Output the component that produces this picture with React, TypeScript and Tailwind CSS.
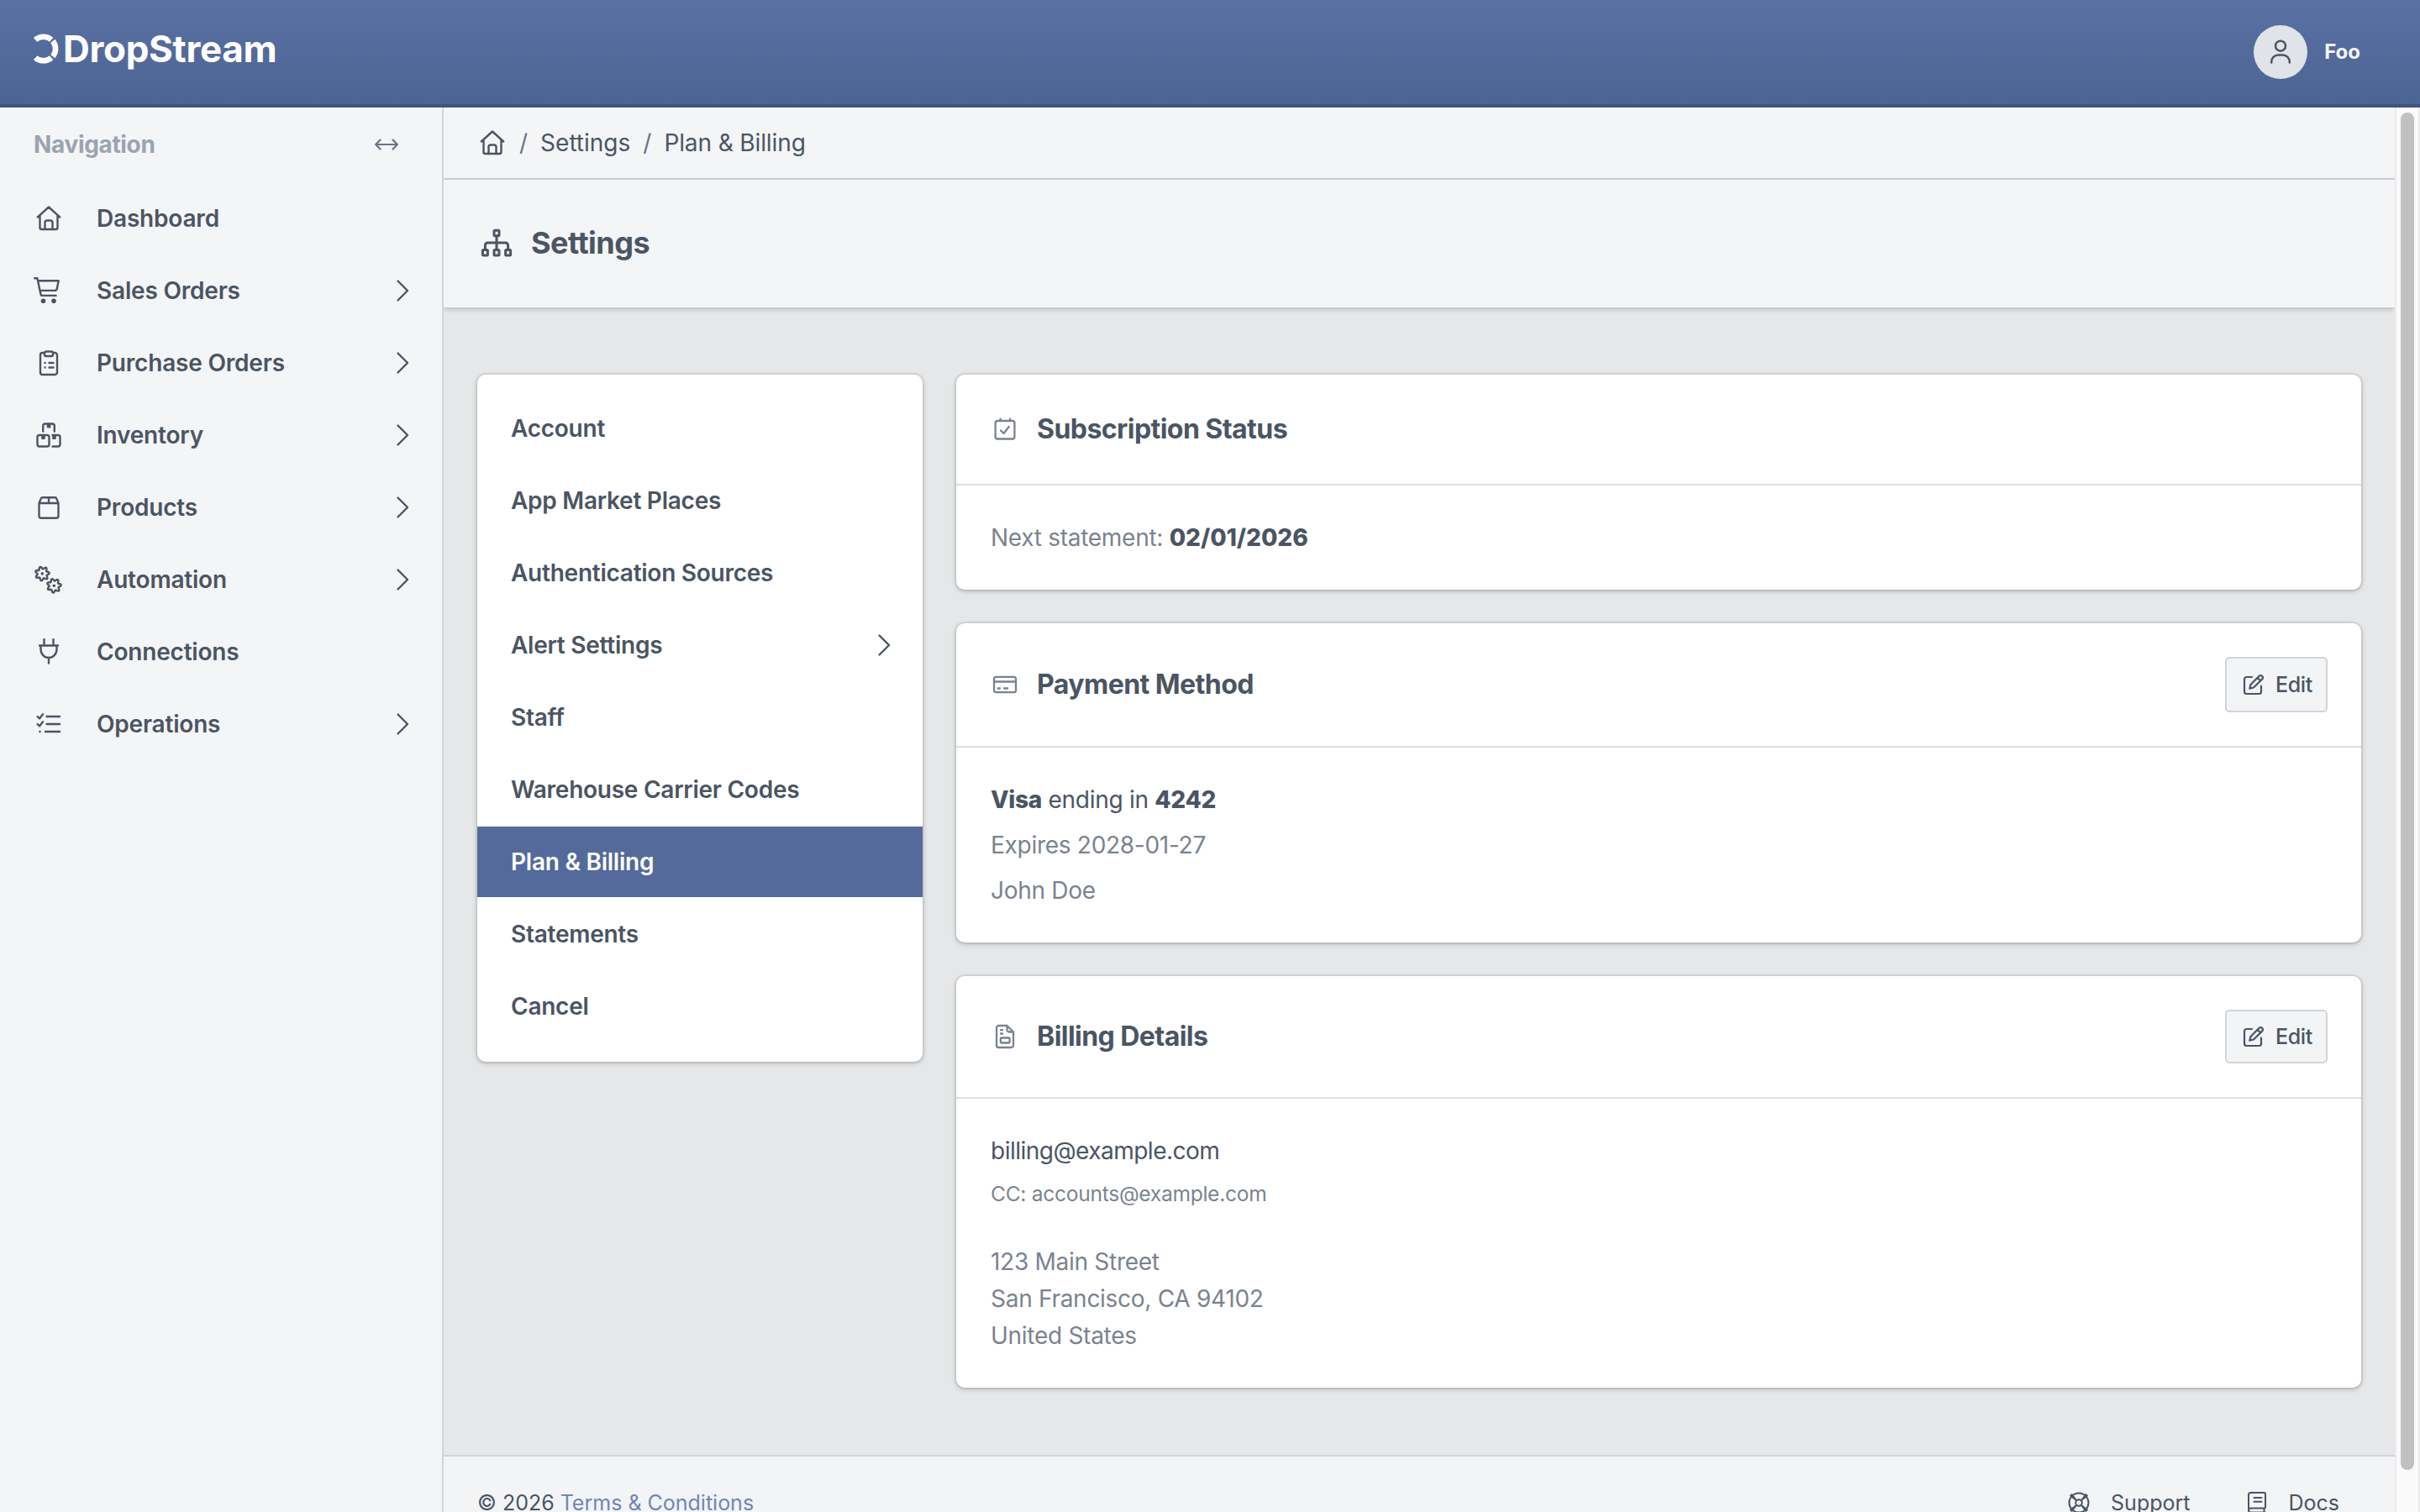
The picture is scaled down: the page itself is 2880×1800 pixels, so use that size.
import React from 'react';

type IconProps = { className?: string };

const HomeIcon = ({ className }: IconProps) => (
  <svg className={className} viewBox="0 0 32 32" fill="none" stroke="currentColor" strokeWidth="2.4" strokeLinecap="round" strokeLinejoin="round">
    <path d="M2.8 14.500 16 2.500l13.200 12M5.500 12.500V27a2 2 0 0 0 2 2h17a2 2 0 0 0 2-2V12.500" />
    <path d="M11.500 29v-8a2.500 2.500 0 0 1 2.500-2.500h4a2.500 2.500 0 0 1 2.500 2.500v8" />
  </svg>
);

const CartIcon = ({ className }: IconProps) => (
  <svg className={className} viewBox="0 0 32 32" fill="none" stroke="currentColor" strokeWidth="2.4" strokeLinecap="round" strokeLinejoin="round" overflow="visible">
    <path d="M-.8 1.300h3.200l4 18.700a2.200 2.200 0 0 0 2.200 1.900h16M3.200 4.200h24.500l-2 9.800a2.400 2.400 0 0 1-2.300 1.900H5.800" />
    <circle cx="9.500" cy="28.200" r="1.600" fill="currentColor" />
    <circle cx="22" cy="28.200" r="1.600" fill="currentColor" />
  </svg>
);

const ClipboardIcon = ({ className }: IconProps) => (
  <svg className={className} viewBox="0 0 32 32" fill="none" stroke="currentColor" strokeWidth="2.4" strokeLinecap="round" strokeLinejoin="round">
    <path d="M11 4H8.500A2.500 2.500 0 0 0 6 6.500v21A2.500 2.500 0 0 0 8.500 30h15a2.500 2.500 0 0 0 2.500-2.500v-21A2.500 2.500 0 0 0 23.500 4H21" />
    <rect x="11" y="2.500" width="10" height="5.500" rx="2" />
    <path d="M11.500 16h.1M16.500 16h5M11.500 21.500h.1M16.500 21.500h5" />
  </svg>
);

const BoxesIcon = ({ className }: IconProps) => (
  <svg className={className} viewBox="0 0 32 32" fill="none" stroke="currentColor" strokeWidth="2.4" strokeLinecap="round" strokeLinejoin="round">
    <path d="M9.200 11.500V5A2.500 2.500 0 0 1 11.700 2.500h8.600A2.500 2.500 0 0 1 22.800 5v6.500" />
    <rect x="2.500" y="16" width="14" height="13.500" rx="2.500" />
    <path d="M20.500 29.500h6.500a2.500 2.500 0 0 0 2.500-2.500v-8.500A2.500 2.500 0 0 0 27 16h-6.500" />
    <path d="M15 3v3.400h2.200V3zM8.400 16.500v3.400h2.200v-3.400zM21.400 16.500v3.400h2.200v-3.400z" fill="currentColor" />
  </svg>
);

const BoxIcon = ({ className }: IconProps) => (
  <svg className={className} viewBox="0 0 32 32" fill="none" stroke="currentColor" strokeWidth="2.4" strokeLinecap="round" strokeLinejoin="round">
    <path d="M4.500 11v15.200a2.500 2.500 0 0 0 2.500 2.500h18a2.500 2.500 0 0 0 2.500-2.500V11M4.500 11 6.600 5.900A2.400 2.400 0 0 1 8.900 4.300h14.200a2.400 2.400 0 0 1 2.300 1.600L27.500 11zM16 4.300V11" />
  </svg>
);

// Closed outline of a small cog with seven rounded teeth
const gearPath = (cx: number, cy: number) => {
  const points = Array.from({ length: 84 }, (_, i) => {
    const angle = (i / 84) * Math.PI * 2;
    const r = 7 + 1.4 * Math.cos(7 * angle + 0.6);
    return `${(cx + r * Math.cos(angle)).toFixed(2)} ${(cy + r * Math.sin(angle)).toFixed(2)}`;
  });
  return `M${points.join('L')}Z`;
};

const GearsIcon = ({ className }: IconProps) => (
  <svg className={className} viewBox="0 0 35 35" fill="none" stroke="currentColor" strokeWidth="2.4" strokeLinejoin="round">
    <path d={gearPath(10.3, 9.9)} />
    <circle cx="10.3" cy="9.9" r="1.8" fill="currentColor" stroke="none" />
    <path d={gearPath(24.3, 24.2)} />
    <circle cx="24.3" cy="24.2" r="1.8" fill="currentColor" stroke="none" />
  </svg>
);

const PlugIcon = ({ className }: IconProps) => (
  <svg className={className} viewBox="0 0 32 32" fill="none" stroke="currentColor" strokeWidth="2.4" strokeLinecap="round" strokeLinejoin="round">
    <path d="M10.500 1v7.500M21.500 1v7.500M5 8.500h22M6.500 8.500V13a9.500 10 0 0 0 19 0V8.500M16 23.500v6" />
  </svg>
);

const ChecklistIcon = ({ className }: IconProps) => (
  <svg className={className} viewBox="0 0 32 32" fill="none" stroke="currentColor" strokeWidth="2.4" strokeLinecap="round" strokeLinejoin="round">
    <path d="m2.600 7 2.400 2.400L9 4.300M2.600 16 5 18.400l4-5.100M13.500 7h15.500M13.500 16h15.500M12 25h17M5.400 25h.1" />
  </svg>
);

const ChevronIcon = ({ className }: IconProps) => (
  <svg className={className} viewBox="0 0 16 28" fill="none" stroke="currentColor" strokeWidth="2.4" strokeLinecap="round" strokeLinejoin="round">
    <path d="m2.500 2.500 11.500 11.500L2.500 25.500" />
  </svg>
);

const ResizeIcon = ({ className }: IconProps) => (
  <svg className={className} viewBox="0 0 28 14" fill="none" stroke="currentColor" strokeWidth="2.2" strokeLinecap="round" strokeLinejoin="round">
    <path d="M6.500 1.500 1.200 7l5.300 5.500M21.500 1.500 26.800 7l-5.300 5.500M1.500 7h25" />
  </svg>
);

const UserIcon = ({ className }: IconProps) => (
  <svg className={className} viewBox="0 0 28 32" fill="none" stroke="currentColor" strokeWidth="2.5" strokeLinecap="round">
    <circle cx="14" cy="8.700" r="6" />
    <path d="M3.200 28.500v-1a8 8 0 0 1 8-8h5.600a8 8 0 0 1 8 8v1" />
  </svg>
);

const SitemapIcon = ({ className }: IconProps) => (
  <svg className={className} viewBox="0 0 40 36" fill="none" stroke="currentColor" strokeWidth="3" strokeLinecap="round" strokeLinejoin="round">
    <rect x="17" y="3.200" width="6" height="6.500" rx="1" />
    <rect x="3.400" y="26.500" width="6" height="6.500" rx="1" />
    <rect x="17" y="26.500" width="6" height="6.500" rx="1" />
    <rect x="30.600" y="26.500" width="6" height="6.500" rx="1" />
    <path d="M20 10v16M6.400 26v-5a3 3 0 0 1 3-3h21.200a3 3 0 0 1 3 3v5" />
  </svg>
);

const CalendarIcon = ({ className }: IconProps) => (
  <svg className={className} viewBox="0 0 32 32" fill="none" stroke="currentColor" strokeWidth="2.3" strokeLinecap="round" strokeLinejoin="round">
    <rect x="4.600" y="6" width="22.800" height="21.500" rx="2.500" />
    <path d="M10.500 3.600V6M22 3.600V6M11 17.500l3.500 3.500 6.200-8" />
  </svg>
);

const CreditCardIcon = ({ className }: IconProps) => (
  <svg className={className} viewBox="0 0 32 32" fill="none" stroke="currentColor" strokeWidth="2.3" strokeLinecap="round" strokeLinejoin="round">
    <rect x="3" y="6.800" width="26" height="18.400" rx="2.500" />
    <path d="M3 12.500h26M7.500 20.500h2.500M15 20.500h4" />
  </svg>
);

const InvoiceIcon = ({ className }: IconProps) => (
  <svg className={className} viewBox="0 0 32 32" fill="none" stroke="currentColor" strokeWidth="2.3" strokeLinecap="round" strokeLinejoin="round">
    <path d="M18.500 3H8.500A2.500 2.500 0 0 0 6 5.500v21A2.500 2.500 0 0 0 8.500 29h15a2.500 2.500 0 0 0 2.500-2.500V10.500zM18.500 3v5a2.500 2.500 0 0 0 2.500 2.500h5" />
    <rect x="10.800" y="17.500" width="10.800" height="6" rx="1" />
    <path d="M11 8.200h2M11 12.500h2" />
  </svg>
);

const EditIcon = ({ className }: IconProps) => (
  <svg className={className} viewBox="0 0 28 28" fill="none" stroke="currentColor" strokeWidth="2.2" strokeLinecap="round" strokeLinejoin="round">
    <path d="M12 5H5.500A2.500 2.500 0 0 0 3 7.500v15A2.500 2.500 0 0 0 5.500 25h15a2.500 2.500 0 0 0 2.500-2.500V15.500" />
    <path d="M20.600 3.700a2.300 2.300 0 0 1 3.300 0l.4.400a2.300 2.300 0 0 1 0 3.300L14 17.500l-4.700 1.200L10.500 14zM18.600 5.800l3.700 3.700" />
  </svg>
);

const SupportIcon = ({ className }: IconProps) => (
  <svg className={className} viewBox="0 0 28 28" fill="none" stroke="currentColor" strokeWidth="2">
    <circle cx="14" cy="14" r="11.500" />
    <circle cx="14" cy="14" r="3.800" />
    <path d="m3.500 5 8 6.500M5 3.500l6.300 8M24.500 5l-8 6.500M23 3.500l-6.300 8M3.500 23l8-6.500M5 24.500l6.300-8M24.500 23l-8-6.500M23 24.500l-6.300-8" />
  </svg>
);

const DocsIcon = ({ className }: IconProps) => (
  <svg className={className} viewBox="0 0 28 28" fill="none" stroke="currentColor" strokeWidth="2" strokeLinecap="round" strokeLinejoin="round">
    <path d="M4 23V4.500A2.500 2.500 0 0 1 6.500 2h16a1.500 1.500 0 0 1 1.500 1.500V19a1.500 1.500 0 0 1-1.500 1.500H6.500A2.500 2.500 0 0 0 4 23a2.500 2.500 0 0 0 2.500 2.500H24M22.500 20.500v5M10.500 8h9M10.500 12.800h9" />
  </svg>
);

const Logo = () => (
  <div className="flex items-center pb-2 text-white">
    <svg className="h-9 w-[30px]" viewBox="0 0 30 36" fill="none" stroke="currentColor" strokeWidth="6.6">
      <path d="M2.100 7.400A14.300 14.300 0 0 1 21.200 7.300" />
      <path d="M22.800 8.900A14.300 14.300 0 0 1 22.800 27.100" />
      <path d="M21.200 28.700A14.300 14.300 0 0 1 2.100 28.600" />
    </svg>
    <span className="-mt-px ml-[5px] text-[44px] leading-none font-bold tracking-[-0.007em]">DropStream</span>
  </div>
);

const navItems = [
  { label: 'Dashboard', Icon: HomeIcon, more: false },
  { label: 'Sales Orders', Icon: CartIcon, more: true },
  { label: 'Purchase Orders', Icon: ClipboardIcon, more: true },
  { label: 'Inventory', Icon: BoxesIcon, more: true },
  { label: 'Products', Icon: BoxIcon, more: true },
  { label: 'Automation', Icon: GearsIcon, more: true },
  { label: 'Connections', Icon: PlugIcon, more: false },
  { label: 'Operations', Icon: ChecklistIcon, more: true },
];

const settingsItems = [
  { label: 'Account' },
  { label: 'App Market Places' },
  { label: 'Authentication Sources' },
  { label: 'Alert Settings', more: true },
  { label: 'Staff' },
  { label: 'Warehouse Carrier Codes' },
  { label: 'Plan & Billing', active: true },
  { label: 'Statements' },
  { label: 'Cancel' },
];

function EditButton({ className }: IconProps) {
  return (
    <button
      className={`flex w-[122px] items-center rounded-[5px] border-2 border-[#d1d5db] bg-[#f3f4f6] pt-0.5 pl-[18px] text-[25px] font-medium tracking-[-0.015em] ${className}`}
    >
      <EditIcon className="mb-0.5 size-7" />
      <span className="ml-3">Edit</span>
    </button>
  );
}

function Card({
  title,
  Icon,
  headerClass,
  action,
  children,
}: {
  title: string;
  Icon: React.FC<IconProps>;
  headerClass: string;
  action?: React.ReactNode;
  children: React.ReactNode;
}) {
  return (
    <section className="rounded-[10px] bg-white shadow-[0_0_0_2px_rgba(0,0,0,0.06),0_2px_6px_rgba(0,0,0,0.2)]">
      <div className={`flex items-center border-b-2 border-[#dcdee0] px-10 ${headerClass}`}>
        <Icon className="size-8 translate-x-0.5 text-[#7b838f]" />
        <h2 className="ml-6 flex-1 text-[32px] font-[650] tracking-[-0.017em]">{title}</h2>
        {action}
      </div>
      <div className="p-10 pl-[41px] text-[28px] leading-[44px] tracking-[-0.01em]">{children}</div>
    </section>
  );
}

export default function App() {
  return (
    <div className="flex h-[1800px] w-[2880px] flex-col overflow-hidden bg-[#f4f5f7] font-['Inter',sans-serif] text-[28px] text-[#4b5563]">
      <header className="flex h-32 shrink-0 items-center justify-between border-b-4 border-[#3f547f] bg-linear-to-b from-[#5a71a3] to-[#4c6494] pr-[71px] pl-10">
        <Logo />
        <div className="flex items-center">
          <div className="flex size-16 items-center justify-center rounded-full bg-[#e0e3e8]">
            <UserIcon className="h-8 w-7" />
          </div>
          <span className="ml-5 text-2xl font-[650] text-[#f3f4f6]">Foo</span>
        </div>
      </header>

      <div className="flex min-h-0 flex-1">
        {/* Main navigation */}
        <aside className="w-[528px] shrink-0 border-r-2 border-[#d1d4dc]">
          <div className="flex h-[89px] items-center justify-between pr-[52px] pb-0.5 pl-10">
            <span className="font-[650] tracking-[-0.012em] text-[#9ca3af]">Navigation</span>
            <ResizeIcon className="h-3.5 w-7 text-[#6b7280]" />
          </div>
          <nav>
            {navItems.map(({ label, Icon, more }) => (
              <a key={label} className="flex h-[86px] items-center pr-[39px] pl-10 font-[570] tracking-[-0.007em]">
                <span className="flex w-[75px]">
                  <Icon className={label === 'Automation' ? 'size-[35px]' : 'ml-0.5 size-8'} />
                </span>
                <span className="flex-1">{label}</span>
                {more && <ChevronIcon className="h-7 w-4" />}
              </a>
            ))}
          </nav>
        </aside>

        <main className="flex min-w-0 flex-1 flex-col overflow-hidden bg-[#e6e7e9]">
          <div className="flex h-[86px] shrink-0 items-center border-b-2 border-[#d1d4dc] bg-[#f4f5f7] pl-10">
            <HomeIcon className="ml-0.5 size-8" />
            <span className="ml-4 text-[#6b7280]">/</span>
            <span className="ml-[15px]">Settings</span>
            <span className="ml-[15px] text-[#6b7280]">/</span>
            <span className="ml-[15px] tracking-[-0.004em]">Plan &amp; Billing</span>
          </div>
          <div className="flex h-[152px] shrink-0 items-center bg-[#f4f5f7] pb-0.5 pl-[43px] shadow-[0_2px_6px_rgba(0,0,0,0.2)]">
            <SitemapIcon className="h-9 w-10" />
            <h1 className="ml-[21px] text-[36px] font-[650] tracking-[-0.014em]">Settings</h1>
          </div>

          <div className="flex h-[1366px] shrink-0 items-start gap-10 px-10 pt-20">
            <div className="w-[530px] shrink-0 rounded-[10px] bg-white py-[22px] shadow-[0_0_0_2px_rgba(0,0,0,0.06),0_2px_6px_rgba(0,0,0,0.2)]">
              {settingsItems.map(({ label, more, active }) => (
                <a
                  key={label}
                  className={`mb-0.5 flex h-[84px] items-center justify-between pr-[38px] pl-10 font-[570] tracking-[-0.009em] ${active ? 'bg-[#536a9b] text-white' : ''}`}
                >
                  {label}
                  {more && <ChevronIcon className="h-7 w-4" />}
                </a>
              ))}
            </div>

            <div className="flex flex-1 flex-col gap-10">
              <Card title="Subscription Status" Icon={CalendarIcon} headerClass="h-[132px]">
                <p className="text-[#7b838f]">
                  Next statement:{' '}
                  <strong className="font-extrabold tracking-normal text-[#4b5563]">02/01/2026</strong>
                </p>
              </Card>
              <Card
                title="Payment Method"
                Icon={CreditCardIcon}
                headerClass="h-[148px]"
                action={<EditButton className="h-[66px]" />}
              >
                <p>
                  <strong className="font-extrabold">Visa</strong> ending in <strong className="font-extrabold">4242</strong>
                </p>
                <p className="mt-2.5 text-[#7b838f]">Expires 2028-01-27</p>
                <p className="mt-2.5 text-[#7b838f]">John Doe</p>
              </Card>
              <Card
                title="Billing Details"
                Icon={InvoiceIcon}
                headerClass="h-[146px]"
                action={<EditButton className="h-16" />}
              >
                <p className="tracking-[-0.018em]">billing@example.com</p>
                <p className="mt-2.5 text-[24.5px] leading-[38px] tracking-[-0.01em] text-[#7b838f]">
                  CC: accounts@example.com
                </p>
                <div className="mt-10 text-[#7b838f]">
                  <p>123 Main Street</p>
                  <p>San Francisco, CA 94102</p>
                  <p>United States</p>
                </div>
              </Card>
            </div>
          </div>

          <footer className="flex h-28 shrink-0 justify-between border-t-2 border-[#d1d5db] bg-[#f3f4f6] pt-9 pr-[66px] pl-10 text-[25px] leading-[38px]">
            <p>
              © 2026 <a className="text-[#6f87b5]">Terms &amp; Conditions</a>
            </p>
            <div className="flex">
              <a className="flex">
                <SupportIcon className="mt-[5px] size-7" />
                <span className="ml-6">Support</span>
              </a>
              <a className="ml-[66px] flex">
                <DocsIcon className="mt-[5px] size-7" />
                <span className="ml-[23px]">Docs</span>
              </a>
            </div>
          </footer>
        </main>

        {/* Scrollbar */}
        <div className="w-[30px] shrink-0 border-x-2 border-[#ebebeb] bg-[#fafafa] px-[5px] pt-1.5">
          <div className="h-[1616px] w-4 rounded-full bg-[#c1c1c1]" />
        </div>
      </div>
    </div>
  );
}
